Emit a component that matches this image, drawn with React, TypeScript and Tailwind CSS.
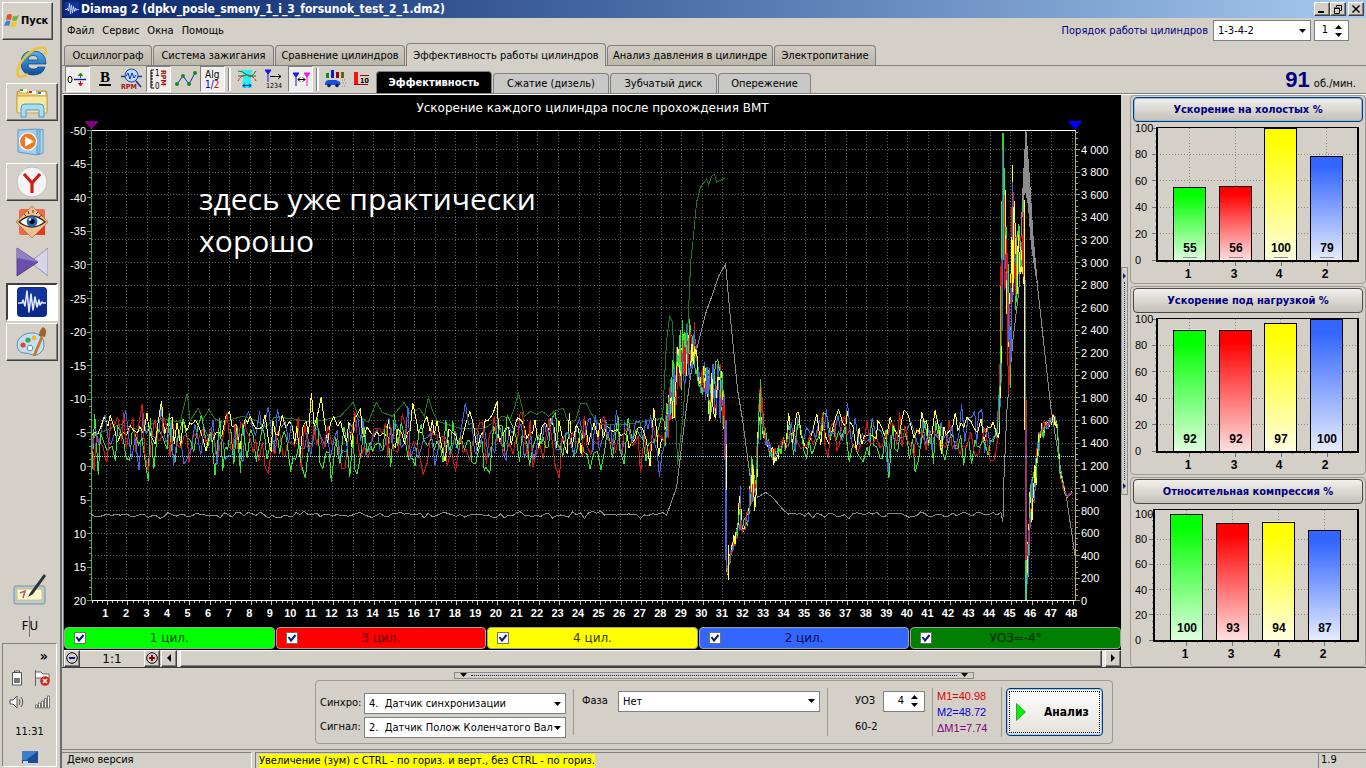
import React, { useMemo, useState } from 'react';
import { clsx } from 'clsx';

type Point = [number, number];
type Envelope = [number, number, number];

const CYLINDERS = ['1', '3', '4', '2'];

const BAR_COLORS = ['#00ff00', '#ff0000', '#ffff00', '#3366ff'];

const BAR_PANELS = [
  { title: 'Ускорение на холостых %', values: [55, 56, 100, 79], left: 24, zero: 138, full: 6, focused: true },
  { title: 'Ускорение под нагрузкой %', values: [92, 92, 97, 100], left: 24, zero: 138, full: 6, focused: false },
  { title: 'Относительная компрессия %', values: [100, 93, 94, 87], left: 21, zero: 136, full: 10, focused: false },
];

const LEGEND = [
  { label: '1 цил.', style: 'bg-[#00ff00] text-[#003c00]' },
  { label: '3 цил.', style: 'bg-[#ff0000] text-[#5a0000]' },
  { label: '4 цил.', style: 'bg-[#ffff00] text-[#3c3c00]' },
  { label: '2 цил.', style: 'bg-[#3366ff] text-[#000a50]' },
  { label: 'УОЗ=-4°', style: 'bg-[#008000] text-[#001e00]' },
];

const MAIN_TABS = [
  { label: 'Осциллограф', width: 'w-[88px]' },
  { label: 'Система зажигания', width: 'w-[121px]' },
  { label: 'Сравнение цилиндров', width: 'w-[130px]' },
  { label: 'Эффективность работы цилиндров', width: 'w-[200px]' },
  { label: 'Анализ давления в цилиндре', width: 'w-[166px]' },
  { label: 'Электропитание', width: 'w-[102px]' },
];

const SUB_TABS = [
  { label: 'Эффективность', width: 'w-[116px]' },
  { label: 'Сжатие (дизель)', width: 'w-[116px]' },
  { label: 'Зубчатый диск', width: 'w-[107px]' },
  { label: 'Опережение', width: 'w-[93px]' },
];

/* ---------- traces ---------- */

// x, centre y, spread
const RUN_UP: Envelope[] = [
  [664, 435, 15], [670, 400, 30], [676, 375, 34], [682, 352, 34], [689, 348, 32], [694, 348, 26],
  [698, 378, 12], [704, 378, 20], [710, 398, 34], [716, 388, 36], [722, 398, 30], [724, 420, 20],
  [726, 565, 6], [728, 570, 12], [732, 545, 8], [737, 530, 7], [739, 512, 24], [742, 528, 6],
  [748, 515, 8], [751, 480, 25], [754, 490, 25], [757, 455, 20], [759, 410, 22], [761, 402, 22],
  [763, 430, 10], [768, 446, 7], [773, 457, 8], [778, 450, 8], [786, 440, 8],
];

const SNAP: Envelope[] = [
  [996, 438, 10], [999, 400, 30], [1001, 260, 90], [1002, 142, 8], [1004, 240, 60], [1006, 280, 60],
  [1008, 340, 60], [1010, 300, 80], [1012, 240, 60], [1015, 270, 44], [1018, 250, 30], [1020, 262, 30],
  [1023, 235, 40], [1025, 400, 60], [1026, 575, 20], [1028, 530, 40], [1031, 500, 24], [1034, 482, 18],
  [1038, 440, 12], [1041, 430, 10], [1046, 426, 6], [1053, 416, 5], [1056, 426, 6], [1059, 470, 4],
  [1063, 490, 3], [1066, 496, 2], [1071, 492, 1],
];

const ADVANCE: Point[] = [
  [92, 436], [120, 424], [140, 430], [162, 418], [180, 422], [187, 393], [190, 420], [198, 408], [203, 419],
  [209, 409], [214, 418], [222, 422], [242, 416], [256, 420], [266, 427], [274, 417], [290, 418], [312, 422],
  [340, 416], [353, 402], [358, 416], [368, 422], [376, 402], [382, 412], [392, 416], [404, 402], [410, 414],
  [419, 408], [424, 416], [428, 397], [432, 410], [437, 421], [460, 428], [484, 428], [502, 416], [510, 418],
  [514, 408], [518, 393], [524, 416], [530, 411], [536, 414], [542, 411], [548, 416], [554, 411], [563, 408],
  [566, 418], [570, 424], [576, 418], [580, 403], [586, 403], [590, 412], [598, 424], [628, 424], [662, 418],
  [666, 340], [669, 316], [672, 322], [677, 465], [683, 410], [687, 333], [690, 263], [693, 235], [696, 202],
  [700, 187], [706, 179], [708, 185], [711, 176], [714, 174], [716, 182], [720, 180], [724, 178],
];

const RPM_RUN_UP: Point[] = [
  [662, 512], [666, 515], [676, 487], [683, 430], [690, 375], [697, 345], [706, 310], [712, 294], [718, 276],
  [725, 264], [729, 310], [737, 390], [742, 420], [750, 480], [757, 497], [765, 492], [772, 497], [783, 510],
];

const RPM_SNAP: Point[] = [
  [1000, 512], [1002, 522], [1003, 480], [1006, 410], [1012, 340], [1018, 290], [1022, 190], [1025, 131],
  [1029, 185], [1032, 235], [1037, 290], [1050, 408], [1060, 470], [1066, 500], [1074, 555],
];

const SERIES = [
  { color: '#32e632', seed: 4211, base: 443, spread: 34 },
  { color: '#e61414', seed: 977, base: 441, spread: 33 },
  { color: '#4169e1', seed: 31337, base: 436, spread: 32 },
  { color: '#ffff32', seed: 5519, base: 430, spread: 30 },
];

function createRandom(seed: number) {
  let s = seed;
  return () => {
    s = (s * 16807) % 2147483647;
    return s / 2147483647;
  };
}

function toPath(points: Point[]) {
  return points.map(([x, y], i) => `${i ? 'L' : 'M'}${x.toFixed(1)} ${y.toFixed(1)}`).join('');
}

function sampleEnvelope(env: Envelope[], rnd: () => number): Point[] {
  const out: Point[] = [];
  for (let i = 1; i < env.length; i++) {
    const [x0, y0, j0] = env[i - 1];
    const [x1, y1, j1] = env[i];
    for (let x = x0; x < x1; x += 1.2) {
      const k = (x - x0) / (x1 - x0);
      out.push([x, y0 + (y1 - y0) * k + (rnd() * 2 - 1) * (j0 + (j1 - j0) * k)]);
    }
  }
  return out;
}

function idleNoise(from: number, to: number, base: number, spread: number, rnd: () => number): Point[] {
  const out: Point[] = [];
  for (let x = from; x < to; x += 1.8 + rnd() * 2.4) {
    const burst = rnd() > 0.9 ? 1.5 : 1;
    out.push([x, base + (rnd() + rnd() - 1) * spread * burst]);
  }
  return out;
}

// short runs with a rotating order, so no cylinder hides the others
function buildTraces() {
  const all = SERIES.map(({ color, seed, base, spread }) => {
    const rnd = createRandom(seed);
    const points = [
      ...idleNoise(92, 662, base, spread, rnd),
      ...sampleEnvelope(RUN_UP, rnd),
      ...idleNoise(788, 994, base - 2, spread * 0.85, rnd),
      ...sampleEnvelope(SNAP, rnd),
    ];
    return { color, points };
  });

  const runs: { color: string; d: string }[] = [];
  const step = 5;
  for (let x = 90, turn = 0; x < 1075; x += step, turn++) {
    for (let k = 0; k < all.length; k++) {
      const { color, points } = all[(k + turn) % all.length];
      const first = points.findIndex((p) => p[0] >= x);
      if (first < 0) continue;
      let last = first;
      while (last < points.length - 1 && points[last][0] < x + step) last++;
      runs.push({ color, d: toPath(points.slice(first, last + 1)) });
    }
  }
  return runs;
}

function rpmTrace(): string {
  const rnd = createRandom(91);
  const flat = (from: number, to: number): Point[] => {
    const out: Point[] = [];
    for (let x = from; x < to; x += 4) out.push([x, 514.5 + (rnd() + rnd() - 1) * 4]);
    return out;
  };
  return toPath([...flat(92, 660), ...RPM_RUN_UP, ...flat(788, 998), ...RPM_SNAP]);
}

const cycleX = (n: number) => 106.4 + (n - 1) * 20.53;
const accelY = (v: number) => 130.5 + (v + 50) * 6.714;
const rpmY = (v: number) => 600.5 - v * 0.1127;
const range = (n: number) => Array.from({ length: n }, (_, i) => i);

function TraceChart() {
  const traces = useMemo(() => buildTraces(), []);
  const rpm = useMemo(() => rpmTrace(), []);

  return (
    <svg viewBox="64 95 1056 531" className="block min-h-0 w-full flex-1" role="img" aria-label="Ускорение">
      <text x="592" y="112" fill="#fff" fontSize="12" textAnchor="middle" className="font-['DejaVu_Sans']">
        Ускорение каждого цилиндра после прохождения ВМТ
      </text>

      {/* grid */}
      <g stroke="#626262" strokeDasharray="1 2" shapeRendering="crispEdges">
        {range(48).map((i) => (
          <line key={i} x1={cycleX(i + 1)} x2={cycleX(i + 1)} y1="132" y2="600" />
        ))}
        {range(20).map((i) => (
          <line key={i} x1="92" x2="1074" y1={rpmY((i + 1) * 200)} y2={rpmY((i + 1) * 200)} />
        ))}
      </g>

      {/* axes */}
      <g shapeRendering="crispEdges" fill="none">
        <path d="M91 130.5H1075M91 600.5H1075" stroke="#fff" />
        <path d="M91.5 130V601" stroke="#4caf50" />
        <path d="M1074.5 130V601" stroke="#c8b428" />
        {range(71).map((i) => (
          <path key={i} d={`M${i % 5 ? 89 : 87} ${accelY(i - 50)}H91`} stroke="#4caf50" />
        ))}
        {range(84).map((i) => (
          <path key={i} d={`M1075 ${rpmY(i * 50)}H${i % 4 ? 1077 : 1079}`} stroke="#a8a060" />
        ))}
        {range(192).map((i) => (
          <path key={i} d={`M${92 + i * 5.133} 601V${i % 4 === 3 ? 605 : 603}`} stroke="#c8c8c8" />
        ))}
      </g>
      <path d="M84 121H99L91.5 129.5Z" fill="#800080" />
      <path d="M1066.5 121H1081.5L1074 129.5Z" fill="#0000ff" />

      <g fill="#fff" fontSize="11" className="font-['Liberation_Sans']">
        {range(15).map((i) => (
          <text key={i} x="86" y={accelY(i * 5 - 50) + 4} textAnchor="end">
            {i * 5 - 50}
          </text>
        ))}
        {range(21).map((i) => (
          <text key={i} x="1080" y={rpmY(i * 200) + 4}>
            {i < 5 ? i * 200 : `${Math.floor(i / 5)} ${String((i % 5) * 200).padStart(3, '0')}`}
          </text>
        ))}
      </g>
      <g fill="#fff" fontSize="11" fontWeight="700" textAnchor="middle" className="font-['Liberation_Sans']">
        {range(48).map((i) => (
          <text key={i} x={cycleX(i + 1) - 1} y="617">
            {i + 1}
          </text>
        ))}
      </g>

      {/* traces */}
      <g fill="none" strokeWidth="1" shapeRendering="crispEdges">
        <path d={rpm} stroke="#8c8c8c" />
        <path
          d="M1020 235L1022 185L1024.5 131L1027 150L1029 185L1033 250L1036 285L1030 245L1027 205L1024 190Z"
          fill="#8c8c8c"
        />
        <path d={toPath(ADVANCE)} stroke="#1f7a1f" />
        {traces.map((t, i) => (
          <path key={i} d={t.d} stroke={t.color} />
        ))}
        <path d="M1002.5 133V260" stroke="#32d232" strokeWidth="2" />
        <path d="M1001.5 150V330" stroke="#4169e1" />
        <path d="M1011.5 165V182" stroke="#ffff32" />
        <path d="M1011.5 182V240" stroke="#4169e1" />
        <path d="M1023.5 200V430" stroke="#ffff32" />
        <path d="M1024.5 280V400" stroke="#4169e1" />
        <path d="M1025.5 400V560" stroke="#a03278" strokeWidth="2" />
        <path d="M1025.5 560V600" stroke="#32d2a0" strokeWidth="2" />
        <path d="M725.5 420V560" stroke="#4169e1" strokeWidth="2" />
        <path d="M725.5 444V490" stroke="#e8ffa0" />
        <path d="M727.5 545V580" stroke="#ffff32" />
        <path d="M739.5 486V530" stroke="#4169e1" />
        <path d="M759.5 379V440" stroke="#32d232" />
        <path d="M92 456.5H1074" stroke="#7df0f0" strokeDasharray="1 1" />
      </g>

      <g fill="#fff" fontSize="30" className="font-['Open_Sans']">
        <text x="199" y="210">здесь уже практически</text>
        <text x="199" y="252">хорошо</text>
      </g>
    </svg>
  );
}

/* ---------- side bar charts ---------- */

function BarPanel({ title, values, left, zero, full, focused }: (typeof BAR_PANELS)[number]) {
  const y = (v: number) => zero - ((zero - full) * v) / 100;
  const barX = (i: number) => left + 16 + i * 46 - (i > 1 && left > 22 ? 1 : 0);

  return (
    <section className="flex flex-1 flex-col rounded-sm border border-[#9d9a92] px-[2px] pt-px">
      <button
        type="button"
        className={clsx(
          'h-[25px] shrink-0 rounded-sm border bg-linear-to-b from-[#f2f0ec] to-[#c4c0b8] text-[11px] leading-none font-bold text-[#000080]',
          focused ? 'border-[#003c74] ring-1 ring-[#8fb8e8] ring-inset' : 'border-[#4a4a4a]',
        )}
      >
        {title}
      </button>
      <svg viewBox="0 0 230 160" className="block w-full font-['Liberation_Sans']" role="img" aria-label={title}>
        <defs>
          {BAR_COLORS.map((c) => (
            <linearGradient key={c} id={`fill-${c.slice(1)}`} x1="0" x2="0" y1="0" y2="1">
              <stop offset="0.1" stopColor={c} />
              <stop offset="1" stopColor={c} stopOpacity="0.12" />
            </linearGradient>
          ))}
        </defs>
        <g stroke="#8a8a86" strokeDasharray="1 2" shapeRendering="crispEdges">
          {[20, 40, 60, 80].map((v) => (
            <line key={v} x1={left} x2="225" y1={y(v)} y2={y(v)} />
          ))}
          {CYLINDERS.map((c, i) => (
            <line key={c} x1={barX(i) + 16} x2={barX(i) + 16} y1="6" y2={zero} />
          ))}
        </g>
        <g stroke="#707070" shapeRendering="crispEdges">
          {range(21).map((i) => (
            <line key={i} x1={i % 4 ? left - 2 : left - 5} x2={left} y1={y(i * 5)} y2={y(i * 5)} />
          ))}
          {range(17).map((i) => (
            <line
              key={i}
              x1={barX(0) - 7 + i * 11.5}
              x2={barX(0) - 7 + i * 11.5}
              y1={zero + 1}
              y2={zero + (i % 4 === 2 ? 6 : 3)}
            />
          ))}
        </g>
        <path d={`M${left} 5.5H226`} stroke="#000" shapeRendering="crispEdges" />
        <path d={`M${left} 5V${zero + 1}H225V5`} fill="none" stroke="#000" strokeWidth="2" shapeRendering="crispEdges" />
        {values.map((v, i) => (
          <g key={CYLINDERS[i]}>
            <rect x={barX(i) + 1} y={y(v)} width="32" height={zero - y(v)} fill="#fff" />
            <rect
              x={barX(i) + 0.5}
              y={y(v) + 0.5}
              width="32"
              height={zero - y(v)}
              fill={`url(#fill-${BAR_COLORS[i].slice(1)})`}
              stroke="#000"
              shapeRendering="crispEdges"
            />
            <text x={barX(i) + 17} y={zero - 8} fontSize="12" fontWeight="700" textAnchor="middle">
              {v}
            </text>
            {focused && <path d={`M${barX(i) + 10} ${zero - 2.5}h14`} stroke="#8a8a86" />}
            <text x={barX(i) + 15} y={zero + 18} fontSize="12" fontWeight="700" textAnchor="middle">
              {CYLINDERS[i]}
            </text>
          </g>
        ))}
        <g fontSize="11">
          {[0, 20, 40, 60, 80, 100].map((v) => (
            <text key={v} x="2" y={y(v) + 4}>
              {v}
            </text>
          ))}
        </g>
      </svg>
    </section>
  );
}

/* ---------- form controls ---------- */

function Caret({ up = false }: { up?: boolean }) {
  return (
    <svg viewBox="0 0 7 4" className="h-1 w-[7px]" aria-hidden="true">
      <path d={up ? 'M0 4L3.5 0L7 4Z' : 'M0 0H7L3.5 4Z'} />
    </svg>
  );
}

function Combo({ id, value, className }: { id: string; value: string; className: string }) {
  return (
    <div className={clsx('relative', className)}>
      <select
        id={id}
        className="block h-[21px] w-full appearance-none border border-[#7f7f7f] bg-white pr-3 pl-[4px] text-[11px] leading-none text-black"
        defaultValue={value}
      >
        <option value={value}>{value}</option>
      </select>
      <span className="pointer-events-none absolute inset-y-0 right-[5px] flex items-center">
        <Caret />
      </span>
    </div>
  );
}

function Spin({ id, initial, label }: { id: string; initial: number; label: string }) {
  const [value, setValue] = useState(initial);
  return (
    <div className="flex h-[21px] border border-[#7f7f7f] bg-white">
      <input
        id={id}
        aria-label={label}
        value={value}
        onChange={(e) => setValue(Number(e.target.value) || 0)}
        className="w-[14px] min-w-0 flex-1 bg-transparent text-right text-[11px] outline-none"
      />
      <span className="flex w-[20px] flex-col items-center justify-center gap-[4px]">
        <button type="button" aria-label="Больше" className="flex" onClick={() => setValue(value + 1)}>
          <Caret up />
        </button>
        <button type="button" aria-label="Меньше" className="flex" onClick={() => setValue(value - 1)}>
          <Caret />
        </button>
      </span>
    </div>
  );
}

/* ---------- taskbar ---------- */

function WaveLogo({ className }: { className: string }) {
  return (
    <svg viewBox="0 0 32 32" className={className} aria-hidden="true">
      <rect x="1" y="1" width="30" height="30" rx="4" fill="#0a2a8c" />
      <rect x="2" y="2" width="28" height="14" rx="3" fill="#12349c" />
      <path
        d="M2 17H6L7 14L9 20L11 5L13 26L15 8L17 24L19 11L21 21L23 14L24 19L26 16L27 17H30"
        fill="none"
        stroke="#dfe8ff"
        strokeWidth="1.6"
        strokeLinejoin="round"
      />
    </svg>
  );
}

function IeIcon() {
  return (
    <svg viewBox="0 0 32 32" className="size-8" aria-hidden="true">
      <defs>
        <linearGradient id="ie" x1="0" x2="0" y1="0" y2="1">
          <stop offset="0" stopColor="#58b4ee" />
          <stop offset="1" stopColor="#0a4c9c" />
        </linearGradient>
      </defs>
      <path
        d="M30 18H12Q12 23 17.5 23Q21 23 22 21H29Q27 29 17 29Q5 29 5 17Q5 5 17 5Q30 5 30 18ZM12 14H22Q22 9.5 17 9.5Q12.5 9.5 12 14Z"
        fill="url(#ie)"
        stroke="#0a3c7c"
        strokeWidth="0.7"
      />
      <path
        d="M28 9C32 3 29 0 22 2C13 5 3 16 1.5 25C0.5 32 6 32 12 28"
        fill="none"
        stroke="#f2c12e"
        strokeWidth="2.4"
      />
    </svg>
  );
}

function FolderIcon() {
  return (
    <svg viewBox="0 0 32 32" className="size-8" aria-hidden="true">
      <path d="M1 7Q1 5 3 5H10L12 7H19L20 5H29Q31 5 31 8V26H1Z" fill="#e8c868" stroke="#b89040" />
      <rect x="4" y="3" width="7" height="3" fill="#fff" />
      <rect x="4" y="3" width="3" height="2" fill="#2ea82e" />
      <rect x="13" y="5" width="7" height="3" fill="#fff" />
      <rect x="13" y="5" width="3" height="2" fill="#d03020" />
      <rect x="22" y="6" width="7" height="3" fill="#fff" />
      <rect x="22" y="6" width="3" height="2" fill="#2080d0" />
      <path d="M1 10H31V27H1Z" fill="#f8e8a0" stroke="#c8a850" />
      <path d="M5 31V22Q5 18 9 18H24Q28 18 28 22V31H23V24H10V31Z" fill="#a8dcf4" stroke="#4a9cc8" />
    </svg>
  );
}

function PlayerIcon() {
  return (
    <svg viewBox="0 0 32 32" className="size-8" aria-hidden="true">
      <path d="M22 5L27 3V27L22 29Z" fill="#b0d8ee" stroke="#5a9cc8" />
      <path d="M20 4L24 3V27L20 29Z" fill="#90c4e4" stroke="#5a9cc8" />
      <path d="M2 4L21 3V29L2 26Z" fill="#a4d0ec" stroke="#5a9cc8" />
      <circle cx="12" cy="15.5" r="8.5" fill="#f07820" stroke="#fff" strokeWidth="1.2" />
      <path d="M9 10.5V20.5L18 15.5Z" fill="#fff" />
    </svg>
  );
}

function YandexIcon() {
  return (
    <svg viewBox="0 0 32 32" className="size-8" aria-hidden="true">
      <circle cx="16" cy="16" r="15" fill="#f4f4f4" stroke="#c0c0c0" />
      <path d="M8 8L16 17M24 8L16 17V27" fill="none" stroke="#d81818" strokeWidth="3.2" />
    </svg>
  );
}

function EyeIcon() {
  return (
    <svg viewBox="0 0 32 32" className="size-8" aria-hidden="true">
      <rect x="3" y="3" width="26" height="26" rx="2" fill="#f06848" />
      <rect x="16" y="16" width="13" height="13" fill="#e83820" />
      <path d="M16 0L32 16L16 32L0 16Z" fill="#f0c090" stroke="#b07040" strokeWidth="0.8" />
      <path d="M3 16Q16 4 29 16Q16 26 3 16Z" fill="#fff" stroke="#3a2010" strokeWidth="1.4" />
      <circle cx="16" cy="15.5" r="5.4" fill="#1868c0" />
      <circle cx="16" cy="15.5" r="2.6" fill="#000" />
      <circle cx="14" cy="13.5" r="1.2" fill="#fff" />
      <path d="M8 8L10 10M12 5L13 8M17 4V7M22 6L20 8M26 9L23 11" stroke="#5a3018" />
    </svg>
  );
}

function KmIcon() {
  return (
    <svg viewBox="0 0 32 32" className="size-8" aria-hidden="true">
      <path d="M32 2V30L14 16Z" fill="#d8d4e8" stroke="#8880a8" strokeWidth="0.8" />
      <path d="M1 2L22 16L1 30Z" fill="#6a50a8" stroke="#483480" strokeWidth="0.8" />
      <path d="M1 2L22 16L1 12Z" fill="#9080c8" />
    </svg>
  );
}

function PaletteIcon() {
  return (
    <svg viewBox="0 0 32 32" className="size-8" aria-hidden="true">
      <path
        d="M14 7C4 8 -1 16 2 23C5 29 11 26 14 28C20 31 28 27 28 19C28 11 22 6 14 7Z"
        fill="#c4e0f0"
        stroke="#5890b0"
      />
      <circle cx="7" cy="19" r="2.6" fill="#d84830" />
      <circle cx="12" cy="14" r="2.6" fill="#38a848" />
      <circle cx="18" cy="12" r="2.4" fill="#e8b830" />
      <circle cx="14" cy="22" r="2.8" fill="#fff" stroke="#5890b0" />
      <path d="M18 30L26 11" stroke="#c87828" strokeWidth="2.8" />
      <path d="M23 10Q23 4 27 1Q32 3 29 11Z" fill="#a06030" />
    </svg>
  );
}

function StartFlag() {
  return (
    <svg viewBox="0 0 16 16" className="size-4" aria-hidden="true">
      <path d="M3 2Q6 0 8 2L7 7Q4 6 2 7Z" fill="#e8502c" />
      <path d="M9 3Q12 4 15 2L13 7Q11 9 8 7Z" fill="#6cb83c" />
      <path d="M2 8Q4 7 6.5 8L5 13Q3 12 0 13Z" fill="#3c80d8" />
      <path d="M8 8.5Q10 10 13 8.5L12 13Q9 15 6 13.5Z" fill="#f4c430" />
    </svg>
  );
}

const TASKS = [
  { name: 'Internet Explorer', icon: <IeIcon />, state: 'flat' },
  { name: 'Проводник', icon: <FolderIcon />, state: 'raised' },
  { name: 'Проигрыватель', icon: <PlayerIcon />, state: 'flat' },
  { name: 'Яндекс', icon: <YandexIcon />, state: 'raised' },
  { name: 'Просмотр', icon: <EyeIcon />, state: 'flat' },
  { name: 'Видео', icon: <KmIcon />, state: 'flat' },
  { name: 'Diamag 2', icon: <WaveLogo className="size-8" />, state: 'pressed' },
  { name: 'Paint', icon: <PaletteIcon />, state: 'raised' },
];

const RAISED =
  'border border-t-white border-l-white border-r-[#404040] border-b-[#404040] shadow-[inset_-1px_-1px_0_#808080]';

function Taskbar() {
  return (
    <aside className="flex w-[62px] shrink-0 flex-col border-r-2 border-r-[#6b6b6b] bg-[#d4d0c8]">
      <button
        type="button"
        className={clsx('mt-[2px] ml-[2px] flex h-[38px] w-[51px] items-center gap-px pl-px text-[11px] font-bold', RAISED)}
      >
        <StartFlag />
        Пуск
      </button>
      <nav className="mt-[3px] ml-[6px] flex flex-col gap-[2px]">
        {TASKS.map((t) => (
          <button
            key={t.name}
            type="button"
            aria-label={t.name}
            className={clsx(
              'flex h-[38px] w-[52px] items-center justify-center',
              t.state === 'raised' && RAISED,
              t.state === 'pressed' &&
                'border-2 border-t-[#404040] border-r-white border-b-white border-l-[#404040] bg-white',
            )}
          >
            {t.icon}
          </button>
        ))}
      </nav>

      <div className="mt-auto flex flex-col items-center">
        <svg viewBox="0 0 34 32" className="h-8 w-[34px]" aria-hidden="true">
          <rect x="1" y="13" width="31" height="18" rx="2" fill="#b8ccd0" stroke="#78909c" />
          <rect x="4" y="16" width="25" height="11" fill="#fffbd0" stroke="#c8c080" />
          <path d="M7 20L12 18L10 25" fill="none" stroke="#c05070" strokeWidth="1.5" />
          <path d="M31 1L17 20L15 24L20 21L33 3Z" fill="#283038" />
        </svg>
        <p className="mt-[11px] flex h-[21px] items-center text-[13px]">
          F<span className="h-full w-px bg-[#707070]" />U
        </p>
      </div>
      <div className="mt-[6px] mr-[3px] mb-[2px] ml-[2px] flex h-[124px] flex-col items-center border border-t-[#808080] border-r-white border-b-white border-l-[#808080] pt-[4px]">
        <span className="self-end pr-[8px] text-[14px] leading-4 font-bold">»</span>
        <div className="mt-[6px] grid grid-cols-2 place-items-center gap-x-[9px] gap-y-[8px]">
          <svg viewBox="0 0 16 16" className="size-4" aria-hidden="true">
            <path d="M5.5 2.5V1H10.5V2.5M3.5 2.5H12.5V15H3.5Z" fill="#fff" stroke="#555" />
            <path d="M5 8H11V13H5Z" fill="#777" />
          </svg>
          <svg viewBox="0 0 16 16" className="size-4" aria-hidden="true">
            <path d="M1.5 0V16M2 2H7L9 4H15V10H9L7 8H2" fill="#fff" stroke="#666" />
            <circle cx="11" cy="11" r="4.8" fill="#d02818" />
            <path d="M9 9L13 13M13 9L9 13" stroke="#fff" strokeWidth="1.6" />
          </svg>
          <svg viewBox="0 0 16 16" className="size-4" aria-hidden="true">
            <path d="M1 6H4L8 2V14L4 10H1Z" fill="#fff" stroke="#555" />
            <path d="M10 5Q12 8 10 11M12 3Q15.5 8 12 13" fill="none" stroke="#555" />
          </svg>
          <svg viewBox="0 0 16 16" className="size-4" aria-hidden="true">
            <path
              d="M1.5 11H3.5V14H1.5ZM4.5 9H6.5V14H4.5ZM7.5 7H9.5V14H7.5ZM10.5 4.5H12.5V14H10.5ZM13.5 2H15.5V14H13.5Z"
              fill="#fff"
              stroke="#555"
              strokeWidth="0.8"
            />
          </svg>
        </div>
        <time className="mt-[14px] text-[11px] leading-4">11:31</time>
        <svg viewBox="0 0 16 13" className="mt-[11px] h-[13px] w-4" aria-hidden="true">
          <rect x="0" y="0" width="16" height="12" fill="#1c4c94" />
          <path d="M0 0H16L4 9H0Z" fill="#3c80cc" />
          <path d="M1 10H6V12H1Z" fill="#bcd8f0" />
        </svg>
      </div>
    </aside>
  );
}

/* ---------- toolbar ---------- */

const TOOLS: { name: string; checked?: boolean; gapBefore?: boolean; art: React.ReactNode }[] = [
  {
    name: 'Смещение нуля',
    checked: true,
    art: (
      <>
        <ellipse cx="4" cy="12.5" rx="2" ry="3.2" fill="none" stroke="#000" />
        <path d="M8 12.5H20" stroke="#1414c8" strokeWidth="1.4" />
        <path d="M14.5 7V11M12.5 8.5L14.5 6L16.5 8.5Z" stroke="#148c14" fill="#148c14" />
        <path d="M14.5 14V18M12.5 16.5L14.5 19L16.5 16.5Z" stroke="#dc1414" fill="#dc1414" />
      </>
    ),
  },
  {
    name: 'Жирная линия',
    art: (
      <>
        <text x="12" y="15" fontSize="15" fontWeight="700" textAnchor="middle" className="font-['Liberation_Serif']">
          B
        </text>
        <path d="M6 18H18" stroke="#000" strokeWidth="2" />
      </>
    ),
  },
  {
    name: 'Обороты',
    art: (
      <>
        <path d="M1 9.5H22M16 14L21 20" stroke="#1432a0" strokeWidth="1.6" />
        <circle cx="11.5" cy="8.5" r="6.5" fill="#b4dcff" stroke="#2846a0" />
        <path d="M6 9L8 6L10 12L12 6L14 11L16 8" fill="none" stroke="#1432a0" />
        <text x="1" y="22" fontSize="7" fontWeight="700" fill="#a01414">
          RPM
        </text>
      </>
    ),
  },
  {
    name: 'Шкала оборотов',
    checked: true,
    art: (
      <>
        <path d="M7 3H4V21H7M4 6H6M4 9H6M4 12H6M4 15H6M4 18H6" fill="none" stroke="#000" />
        <text x="8" y="9" fontSize="8">
          1
        </text>
        <text x="8" y="22" fontSize="8">
          0
        </text>
        <text x="3" y="-14" fontSize="7" fontWeight="700" fill="#a01414" transform="rotate(90)">
          RPM
        </text>
      </>
    ),
  },
  {
    name: 'Точки',
    art: (
      <>
        <path d="M3 17L9 9L15 17L21 6" fill="none" stroke="#1428dc" />
        {[
          [3, 17],
          [9, 9],
          [15, 17],
          [21, 6],
        ].map(([x, y]) => (
          <circle key={x} cx={x} cy={y} r="2" fill="#148c14" />
        ))}
      </>
    ),
  },
  {
    name: 'Алгоритм',
    checked: true,
    art: (
      <>
        <text x="4" y="11" fontSize="10">
          Alg
        </text>
        <text x="4" y="21" fontSize="10" fill="#0000c8">
          1/<tspan fill="#dc1414">2</tspan>
        </text>
      </>
    ),
  },
  {
    name: 'Усреднение',
    gapBefore: true,
    art: (
      <>
        <path d="M6 3H18L16 7V13L17 21H7L8 13V7Z" fill="#28f0f0" />
        <path d="M3 4Q8 4 12 8T21 4M3 9H9M15 9H21" fill="none" stroke="#147814" />
        <path d="M3 14Q6 8 12 8T21 14" fill="none" stroke="#dc1414" strokeDasharray="3 1" />
        <path d="M8 18.5H16M10 16.5L8 18.5L10 20.5M14 16.5L16 18.5L14 20.5" fill="none" stroke="#1414c8" />
      </>
    ),
  },
  {
    name: 'Нумерация',
    art: (
      <>
        <path d="M3 3H9L6 7ZM6 7V15" fill="#1414f0" stroke="#1414f0" />
        <path d="M8 9.5H19M16 7L19 9.5L16 12" fill="none" stroke="#000" />
        <text x="4" y="21" fontSize="7">
          1234
        </text>
      </>
    ),
  },
  {
    name: 'Маркеры',
    checked: true,
    art: (
      <>
        <path d="M4 6H10L7 10ZM7 10V19" fill="#1414f0" stroke="#1414f0" />
        <path d="M15 6H21L18 10ZM18 10V19" fill="#f014f0" stroke="#f014f0" />
        <path d="M9 12.5H16M11 10.5L9 12.5L11 14.5M14 10.5L16 12.5L14 14.5" fill="none" stroke="#000" />
      </>
    ),
  },
  {
    name: 'Автомобиль',
    gapBefore: true,
    art: (
      <>
        <path d="M3 6H6V11H3Z" fill="#148c14" />
        <path d="M8 3H11V11H8Z" fill="#1414c8" />
        <path d="M13 5H16V11H13Z" fill="#960014" />
        <path d="M18 5H21V11H18Z" fill="#646400" />
        <path d="M2 16Q3 13 6 13H13L17 15Q18 16 17 18H2Z" fill="#1450dc" />
        <circle cx="6" cy="18.5" r="1.8" fill="#0a1e64" />
        <circle cx="14" cy="18.5" r="1.8" fill="#0a1e64" />
        <path d="M19 13H22M20 16H23M19 19H22" stroke="#8c8c8c" strokeDasharray="1 1" />
      </>
    ),
  },
  {
    name: 'Десять',
    art: (
      <>
        <path d="M4 5H8V17H4Z" fill="#f01414" />
        <path d="M4 17.5H18M10 8.5H19" stroke="#960014" />
        <text x="10" y="16" fontSize="7" fontWeight="700">
          10
        </text>
      </>
    ),
  },
];

function Toolbar() {
  const [sub, setSub] = useState(0);
  return (
    <div className="flex h-[29px] shrink-0 items-start border-b border-b-white bg-[#d4d0c8] pl-[3px] shadow-[inset_0_-1px_0_#7f7f7f]">
      <div className="flex gap-[2px]">
        {TOOLS.map((t) => (
          <React.Fragment key={t.name}>
            {t.gapBefore && <span className="mx-px mt-[2px] h-[23px] w-[3px] border-l border-l-[#808080] bg-white" />}
            <button
              type="button"
              aria-label={t.name}
              className={clsx(
                'h-[26px] w-[25px]',
                t.checked &&
                  'border border-t-[#808080] border-r-white border-b-white border-l-[#808080] bg-[#f0eeea]',
              )}
            >
              <svg viewBox="0 0 24 24" className="mx-auto size-6">
                {t.art}
              </svg>
            </button>
          </React.Fragment>
        ))}
      </div>
      <div className="mt-[5px] flex items-end gap-px pl-[2px]" role="tablist">
        {SUB_TABS.map((t, i) => (
          <button
            key={t.label}
            type="button"
            role="tab"
            aria-selected={i === sub}
            onClick={() => setSub(i)}
            className={clsx(
              'rounded-t-sm border border-b-0 border-[#7f7f7f] text-[11px] leading-none whitespace-nowrap',
              t.width,
              i === sub ? 'h-[22px] bg-black font-bold text-white' : 'h-[20px] bg-[#c8c8c6]',
            )}
          >
            {t.label}
          </button>
        ))}
      </div>
      <p className="mr-[10px] ml-auto flex items-baseline gap-1 text-[11px]">
        <b className="font-['Liberation_Sans'] text-[22px] leading-7 text-[#000080]">91</b>
        об./мин.
      </p>
    </div>
  );
}

function WindowButton({ label, children }: { label: string; children: React.ReactNode }) {
  return (
    <button
      type="button"
      aria-label={label}
      className={clsx('flex h-[14px] w-4 items-center justify-center bg-[#d4d0c8]', RAISED)}
    >
      <svg viewBox="0 0 10 10" className="size-[10px]" fill="none" stroke="#000">
        {children}
      </svg>
    </button>
  );
}

function ScrollButton({ label, d }: { label: string; d: string }) {
  return (
    <button type="button" aria-label={label} className={clsx('flex w-4 items-center justify-center', RAISED)}>
      <svg viewBox="0 0 4 8" className="h-2 w-1">
        <path d={d} />
      </svg>
    </button>
  );
}

const DIVIDER = 'w-px shrink-0 bg-[#9d9a92]';

export default function App() {
  const [tab, setTab] = useState(3);

  return (
    <div className="flex min-h-screen bg-[#d4d0c8] font-['DejaVu_Sans_Condensed','DejaVu_Sans',sans-serif] text-[11px] text-black">
      <Taskbar />
      <div className="flex min-w-0 flex-1 flex-col">
        <header className="flex h-[18px] shrink-0 items-center bg-linear-to-r from-[#0a246a] to-[#a6caf0] px-[2px]">
          <WaveLogo className="size-4" />
          <h1 className="ml-px text-[12px] leading-none font-bold text-white">
            Diamag 2 (dpkv_posle_smeny_1_i_3_forsunok_test_2_1.dm2)
          </h1>
          <div className="ml-auto flex">
            <WindowButton label="Свернуть">
              <path d="M1 8H7" strokeWidth="2" />
            </WindowButton>
            <WindowButton label="Восстановить">
              <path d="M3.5 3V1.5H8.5V6.5H7M1 4H6.5V9.5H1.5V4M1 4.5H7" />
            </WindowButton>
            <span className="w-[2px]" />
            <WindowButton label="Закрыть">
              <path d="M1.5 1.5L8.5 8.5M8.5 1.5L1.5 8.5" strokeWidth="1.5" />
            </WindowButton>
          </div>
        </header>

        <div className="flex h-[25px] shrink-0 items-center pr-[17px] pl-[5px]">
          <nav className="flex gap-[8px] pt-[2px]">
            {['Файл', 'Сервис', 'Окна', 'Помощь'].map((m) => (
              <button key={m} type="button">
                {m}
              </button>
            ))}
          </nav>
          <label htmlFor="order" className="mr-[5px] ml-auto pt-[2px] text-[#000080]">
            Порядок работы цилиндров
          </label>
          <Combo id="order" value="1-3-4-2" className="mr-[3px] w-[98px]" />
          <div className="w-[35px]">
            <Spin id="orderStart" initial={1} label="Первый цилиндр" />
          </div>
        </div>

        <div className="flex h-[23px] shrink-0 items-end gap-px border-b border-b-[#7f7f7f] pl-[2px]" role="tablist">
          {MAIN_TABS.map((t, i) => (
            <button
              key={t.label}
              type="button"
              role="tab"
              aria-selected={i === tab}
              onClick={() => setTab(i)}
              className={clsx(
                'rounded-t-sm border border-b-0 border-[#7f7f7f] leading-none whitespace-nowrap',
                t.width,
                i === tab ? '-mb-px h-[23px] bg-[#d4d0c8]' : 'h-[20px] bg-linear-to-b from-[#d0ccc2] to-[#bcb6a8]',
              )}
            >
              {t.label}
            </button>
          ))}
        </div>

        <Toolbar />

        <main className="flex flex-1">
          <div className="ml-px flex min-w-0 flex-1 flex-col border-l border-l-[#808080] bg-black">
            <TraceChart />
            <div className="flex h-[23px] shrink-0 gap-px pb-px">
              {LEGEND.map((l) => (
                <label
                  key={l.label}
                  className={clsx(
                    "relative flex flex-1 items-center justify-center rounded-[4px] border border-[#a0a0a0] font-['DejaVu_Sans'] text-[12px]",
                    l.style,
                  )}
                >
                  <input
                    type="checkbox"
                    defaultChecked
                    className="peer absolute left-[9px] size-3 appearance-none border border-[#707070] bg-white"
                  />
                  <svg
                    viewBox="0 0 12 12"
                    className="pointer-events-none absolute left-[9px] hidden size-3 peer-checked:block"
                    aria-hidden="true"
                  >
                    <path d="M2.5 5L5 8.5L9.5 3" fill="none" stroke="#0a246a" strokeWidth="2" />
                  </svg>
                  {l.label}
                </label>
              ))}
            </div>
            <div className="flex h-[17px] shrink-0 items-stretch bg-[#d4d0c8]">
              <button
                type="button"
                aria-label="Уменьшить"
                className={clsx('flex w-4 items-center justify-center', RAISED)}
              >
                <svg viewBox="0 0 12 12" className="size-3" fill="none">
                  <circle cx="6" cy="6" r="5.3" stroke="#000" />
                  <path d="M3 6H9" stroke="#000080" strokeWidth="2" />
                </svg>
              </button>
              <span className="flex w-[64px] items-center justify-center border-t border-t-white font-['DejaVu_Sans'] text-[12px]">
                1:1
              </span>
              <button
                type="button"
                aria-label="Увеличить"
                className={clsx('flex w-4 items-center justify-center', RAISED)}
              >
                <svg viewBox="0 0 12 12" className="size-3" fill="none">
                  <circle cx="6" cy="6" r="5.3" stroke="#000" />
                  <path d="M3 6H9M6 3V9" stroke="#960000" strokeWidth="2" />
                </svg>
              </button>
              <span className="w-px" />
              <ScrollButton label="Влево" d="M4 0V8L0 4Z" />
              <div className="flex-1 bg-[#ebe9e4] px-[3px]">
                <div className={clsx('h-full bg-[#d4d0c8]', RAISED)} />
              </div>
              <ScrollButton label="Вправо" d="M0 0V8L4 4Z" />
            </div>
          </div>

          <div className="flex w-[9px] shrink-0 flex-col items-start justify-center">
            <div className="flex h-[228px] w-[7px] flex-col items-center justify-between border border-[#8c8c8c] py-[5px]">
              <svg viewBox="0 0 3 6" className="h-[6px] w-[3px]">
                <path d="M0 0V6L3 3Z" fill="#0a246a" />
              </svg>
              <span className="my-[3px] flex-1 border-l border-dotted border-l-[#0a246a]" />
              <svg viewBox="0 0 3 6" className="h-[6px] w-[3px]">
                <path d="M0 0V6L3 3Z" fill="#0a246a" />
              </svg>
            </div>
          </div>

          <div className="flex w-[236px] shrink-0 flex-col gap-[2px]">
            {BAR_PANELS.map((p) => (
              <BarPanel key={p.title} {...p} />
            ))}
          </div>
        </main>

        <footer className="flex shrink-0 flex-col items-center border-t border-t-[#404040] pt-[4px]">
          <div className="flex h-[7px] w-[520px] items-center gap-[4px] border border-[#8c8c8c] px-[5px]">
            <Caret />
            <span className="flex-1 border-t border-dotted border-t-[#0a246a]" />
            <Caret />
          </div>
          <form
            className="mt-px flex h-[64px] w-[798px] rounded-[4px] border border-[#9d9a92] px-[4px]"
            onSubmit={(e) => e.preventDefault()}
          >
            <div className="grid grid-cols-[44px_202px] content-center gap-y-[3px] pt-[8px]">
              <label htmlFor="sync" className="self-center">
                Синхро:
              </label>
              <Combo id="sync" value={'4.\u00a0 Датчик синхронизации'} className="w-full" />
              <label htmlFor="signal" className="self-center">
                Сигнал:
              </label>
              <Combo id="signal" value={'2.\u00a0 Датчик Полож Коленчатого Вал'} className="w-full" />
            </div>
            <span className={clsx('my-[8px] ml-[7px]', DIVIDER)} />
            <div className="mt-[10px] ml-[8px] flex h-[21px] items-center">
              <label htmlFor="phase" className="w-[36px]">
                Фаза
              </label>
              <Combo id="phase" value="Нет" className="w-[202px]" />
            </div>
            <span className={clsx('my-[7px] ml-[7px]', DIVIDER)} />
            <div className="mt-[10px] ml-[27px] flex w-[70px] flex-col gap-[7px]">
              <div className="flex items-center justify-between">
                <label htmlFor="advance">УОЗ</label>
                <div className="w-[42px]">
                  <Spin id="advance" initial={4} label="УОЗ" />
                </div>
              </div>
              <span>60-2</span>
            </div>
            <span className={clsx('my-[7px] ml-[7px]', DIVIDER)} />
            <div className="mt-[7px] ml-[4px] w-[64px] font-['Liberation_Sans'] text-[11px] leading-4">
              <p className="text-[#e00000]">M1=40.98</p>
              <p className="text-[#0000e0]">M2=48.72</p>
              <p className="text-[#800080]">ΔM1=7.74</p>
            </div>
            <span className={clsx('my-[6px]', DIVIDER)} />
            <button
              type="submit"
              className="mt-[7px] ml-[4px] flex h-[48px] w-[97px] rounded-sm border border-[#003c74] bg-linear-to-b from-white to-[#e4e2da] p-[2px] text-[12px] font-bold ring-1 ring-[#a8c8f0] ring-inset"
            >
              <span className="flex h-full w-full items-center gap-[18px] border border-dotted border-black pl-[6px]">
                <svg viewBox="0 0 10 18" className="h-[18px] w-[10px]" aria-hidden="true">
                  <path d="M0.5 0.5V17.5L9.5 9Z" fill="#00f000" stroke="#40a040" />
                </svg>
                Анализ
              </span>
            </button>
          </form>
          <div className="mt-[5px] flex h-[20px] w-full items-stretch border-t border-t-[#808080] pt-[2px]">
            <span className="flex w-[190px] items-center border-t border-r border-t-[#808080] border-r-white pl-[5px]">
              Демо версия
            </span>
            <span className="ml-[3px] flex flex-1 items-center border-t border-l border-t-[#808080] border-l-[#808080] pl-[3px]">
              <mark className="bg-[#ffff00] leading-[14px] text-black">
                Увеличение (зум) с CTRL - по гориз. и верт., без CTRL - по гориз.
              </mark>
            </span>
            <span className="flex w-[48px] items-center border-t border-l border-t-[#808080] border-l-[#808080] pl-[2px]">
              1.9
            </span>
          </div>
        </footer>
      </div>
    </div>
  );
}
